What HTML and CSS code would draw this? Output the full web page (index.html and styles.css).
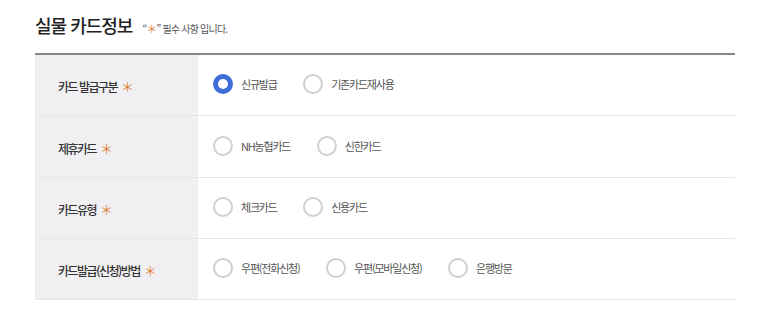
FILE: index.html
```html
<!DOCTYPE html>
<html lang="ko">
<head>
    <meta charset="UTF-8">
    <title>실물 카드정보</title>
    <link rel="stylesheet" href="styles.css">
</head>
<body>

<div class="section">
    <div class="title-row">
        <h2>실물 카드정보</h2>
        <span class="note">“<span class="req">＊</span>” 필수 사항 입니다.</span>
    </div>

    <table class="form-table">
        <tr>
            <th>카드 발급구분 <span class="req">＊</span></th>
            <td>
                <label class="radio"><input type="radio" name="issue" checked><span class="dot"></span>신규발급</label>
                <label class="radio"><input type="radio" name="issue"><span class="dot"></span>기존카드재사용</label>
            </td>
        </tr>
        <tr>
            <th>제휴카드 <span class="req">＊</span></th>
            <td>
                <label class="radio"><input type="radio" name="partner"><span class="dot"></span>NH농협카드</label>
                <label class="radio"><input type="radio" name="partner"><span class="dot"></span>신한카드</label>
            </td>
        </tr>
        <tr>
            <th>카드유형 <span class="req">＊</span></th>
            <td>
                <label class="radio"><input type="radio" name="type"><span class="dot"></span>체크카드</label>
                <label class="radio"><input type="radio" name="type"><span class="dot"></span>신용카드</label>
            </td>
        </tr>
        <tr>
            <th>카드발급(신청)방법 <span class="req">＊</span></th>
            <td>
                <label class="radio"><input type="radio" name="method"><span class="dot"></span>우편(전화신청)</label>
                <label class="radio"><input type="radio" name="method"><span class="dot"></span>우편(모바일신청)</label>
                <label class="radio"><input type="radio" name="method"><span class="dot"></span>은행방문</label>
            </td>
        </tr>
    </table>
</div>

</body>
</html>
```

FILE: styles.css
```css
body {
    margin: 0;
    font-family: "Noto Sans CJK KR", "Noto Sans", sans-serif;
    background: #fff;
    color: #333;
}
.section {
    width: 700px;
    margin-left: 35px;
    padding-top: 12px;
}
.title-row {
    display: flex;
    align-items: baseline;
    height: 29px;
    margin-bottom: 12px;
}
.title-row h2 {
    margin: 0;
    font-size: 18px;
    font-weight: 500;
    color: #222;
    letter-spacing: -1px;
}
.note {
    margin-left: 10px;
    font-size: 10px;
    color: #555;
    letter-spacing: -0.8px;
}
.note .req {
    font-size: 11px;
}
.req {
    color: #e0803a;
}
.form-table {
    width: 100%;
    border-collapse: collapse;
    border-top: 2px solid #888;
}
.form-table tr {
    border-bottom: 1px solid #e6e6e6;
}
.form-table th {
    width: 140px;
    height: 57px;
    padding: 3px 0 0 23px;
    background: #f0f0f2;
    text-align: left;
    font-size: 12px;
    font-weight: 500;
    color: #333;
    letter-spacing: -1.5px;
}
.form-table tr:nth-child(2) th {
    height: 58px;
}
.form-table th .req {
    font-size: 13px;
    font-weight: 400;
    margin-left: 2px;
}
.form-table td {
    padding: 3px 0 0 15px;
}
.radio {
    display: inline-flex;
    align-items: center;
    margin-right: 22px;
    font-size: 11px;
    color: #555;
    letter-spacing: -1.2px;
    cursor: pointer;
}
.radio input {
    display: none;
}
.dot {
    width: 20px;
    height: 20px;
    box-sizing: border-box;
    border: 2px solid #cfcfcf;
    border-radius: 50%;
    margin-right: 8px;
    background: #fff;
}
.radio input:checked + .dot {
    border: 5px solid #3e6fd8;
}
```
